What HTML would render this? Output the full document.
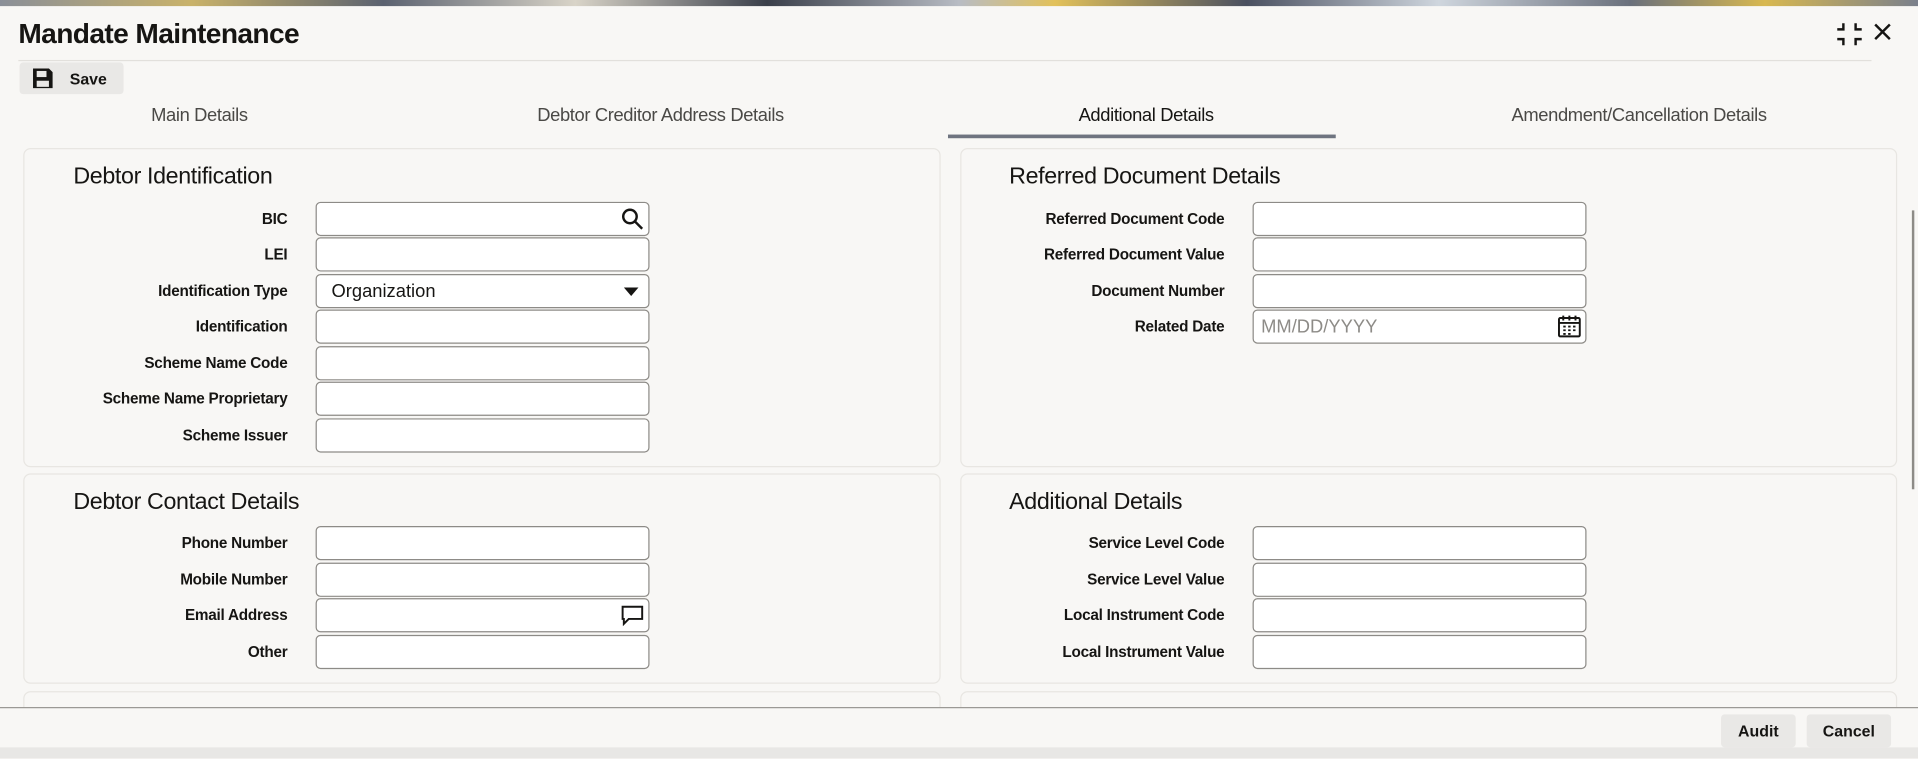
<!DOCTYPE html>
<html><head><meta charset="utf-8"><style>
*{box-sizing:border-box;margin:0;padding:0}
body{width:1918px;height:759px;overflow:hidden;background:#f7f6f4;font-family:"Liberation Sans",sans-serif;}
#w{width:1568px;height:620px;transform:scale(1.22321);transform-origin:0 0;position:relative;background:#f8f7f5}
.a{position:absolute}
.top{left:0;top:0;width:1568px;height:5px;background:linear-gradient(90deg,#8a8f98,#c9b26a 10%,#5b6270 20%,#d9d4c8 30%,#3a3f4a 40%,#b8bcc4 50%,#e2c15a 55%,#4a5060 65%,#cfd6de 75%,#6a707c 85%,#d8b850 92%,#7a808c)}
h1{position:absolute;left:15px;top:14px;font-size:23px;font-weight:bold;color:#161513;letter-spacing:-0.5px}
.hl{left:15px;top:49px;width:1515px;height:1px;background:#e2e0dc}
.save{left:16px;top:51px;width:85px;height:26px;background:#e9e8e6;border-radius:3px;font-size:13px;font-weight:bold;color:#161513}
.tab{top:86px;font-size:15px;color:#4a4946;transform:translateX(-50%);white-space:nowrap;letter-spacing:-0.3px}
.ul{left:775px;top:110px;width:317px;height:3px;background:#6f7480}
.pn{background:#f8f7f5;border:1px solid #e8e6e2;border-radius:6px}
.h2{font-size:19px;color:#161513;letter-spacing:-0.3px}
.lb{font-size:12.5px;font-weight:bold;color:#161513;text-align:right;width:230px;letter-spacing:-0.2px}
.in{width:273px;height:28px;background:#fff;border:1px solid #8d8b87;border-radius:4px;font-size:15px;color:#161513}
.btn{height:27px;background:#e9e8e6;border-radius:3px;font-size:13px;font-weight:bold;color:#161513;text-align:center;line-height:27px}
</style></head><body><div id="w">
<div class="a top"></div>
<h1>Mandate Maintenance</h1>
<div class="a" style="left:1500px;top:17px;width:24px;height:22px">
<svg width="24" height="22" viewBox="0 0 24 22" fill="none" stroke="#161513" stroke-width="2"><path d="M7 2v5H2M17 2v5h5M7 20v-5H2M17 20v-5h5"/></svg></div>
<div class="a" style="left:1531px;top:18px"><svg width="16" height="16" viewBox="0 0 16 16" stroke="#161513" stroke-width="2"><path d="M2 2L14 14M14 2L2 14"/></svg></div>
<div class="a hl"></div>
<div class="a save"><svg class="a" style="left:10px;top:4px" width="18" height="18" viewBox="0 0 18 18"><path d="M1 1h13l3 3v13H1z" fill="#161513"/><rect x="4" y="3" width="8" height="5" fill="#e9e8e6"/><rect x="4" y="11" width="10" height="5" fill="#e9e8e6"/></svg><span class="a" style="left:41px;top:6px">Save</span></div>
<div class="a tab" style="left:163px">Main Details</div>
<div class="a tab" style="left:540px">Debtor Creditor Address Details</div>
<div class="a tab" style="left:937px;color:#161513">Additional Details</div>
<div class="a tab" style="left:1340px">Amendment/Cancellation Details</div>
<div class="a ul"></div>

<div class="a pn" style="left:19px;top:121px;width:750px;height:261px"></div>
<div class="a pn" style="left:785px;top:121px;width:766px;height:261px"></div>
<div class="a pn" style="left:19px;top:387px;width:750px;height:172px"></div>
<div class="a pn" style="left:785px;top:387px;width:766px;height:172px"></div>
<div class="a pn" style="left:19px;top:565px;width:750px;height:30px"></div>
<div class="a pn" style="left:785px;top:565px;width:766px;height:30px"></div>

<div class="a h2" style="left:60px;top:134px">Debtor Identification</div>
<div class="a h2" style="left:825px;top:134px">Referred Document Details</div>
<div class="a h2" style="left:60px;top:400px">Debtor Contact Details</div>
<div class="a h2" style="left:825px;top:400px">Additional Details</div>

<div class="a lb" style="left:5px;top:172px">BIC</div><div class="a in" style="left:258px;top:165px"><svg class="a" style="right:4px;top:4px" width="18" height="18" viewBox="0 0 18 18" fill="none" stroke="#161513" stroke-width="2"><circle cx="7" cy="7" r="5.5"/><path d="M11 11l6 6"/></svg></div>
<div class="a lb" style="left:5px;top:201px">LEI</div><div class="a in" style="left:258px;top:194px"></div>
<div class="a lb" style="left:5px;top:231px">Identification Type</div><div class="a in" style="left:258px;top:224px"><span class="a" style="left:12px;top:5px">Organization</span><svg class="a" style="right:8px;top:10px" width="12" height="7"><path d="M0 0h12L6 7z" fill="#161513"/></svg></div>
<div class="a lb" style="left:5px;top:260px">Identification</div><div class="a in" style="left:258px;top:253px"></div>
<div class="a lb" style="left:5px;top:290px">Scheme Name Code</div><div class="a in" style="left:258px;top:283px"></div>
<div class="a lb" style="left:5px;top:319px">Scheme Name Proprietary</div><div class="a in" style="left:258px;top:312px"></div>
<div class="a lb" style="left:5px;top:349px">Scheme Issuer</div><div class="a in" style="left:258px;top:342px"></div>

<div class="a lb" style="left:771px;top:172px">Referred Document Code</div><div class="a in" style="left:1024px;top:165px"></div>
<div class="a lb" style="left:771px;top:201px">Referred Document Value</div><div class="a in" style="left:1024px;top:194px"></div>
<div class="a lb" style="left:771px;top:231px">Document Number</div><div class="a in" style="left:1024px;top:224px"></div>
<div class="a lb" style="left:771px;top:260px">Related Date</div><div class="a in" style="left:1024px;top:253px"><span class="a" style="left:6px;top:5px;color:#8d8b87">MM/DD/YYYY</span><svg class="a" style="right:3px;top:3px" width="20" height="20" viewBox="0 0 20 20" fill="none" stroke="#161513" stroke-width="1.6"><rect x="1.5" y="3" width="17" height="15" rx="1"/><path d="M1.5 7h17M5 1v4M10 1v4M15 1v4" /><path d="M5 10h2M9 10h2M13 10h2M5 13h2M9 13h2M13 13h2M5 16h2M9 16h2" stroke-width="1.5"/></svg></div>

<div class="a lb" style="left:5px;top:437px">Phone Number</div><div class="a in" style="left:258px;top:430px"></div>
<div class="a lb" style="left:5px;top:467px">Mobile Number</div><div class="a in" style="left:258px;top:460px"></div>
<div class="a lb" style="left:5px;top:496px">Email Address</div><div class="a in" style="left:258px;top:489px"><svg class="a" style="right:3px;top:4px" width="20" height="18" viewBox="0 0 20 18" fill="none" stroke="#161513" stroke-width="1.6"><path d="M2 2h16v10H7l-4 4v-4H2z"/></svg></div>
<div class="a lb" style="left:5px;top:526px">Other</div><div class="a in" style="left:258px;top:519px"></div>

<div class="a lb" style="left:771px;top:437px">Service Level Code</div><div class="a in" style="left:1024px;top:430px"></div>
<div class="a lb" style="left:771px;top:467px">Service Level Value</div><div class="a in" style="left:1024px;top:460px"></div>
<div class="a lb" style="left:771px;top:496px">Local Instrument Code</div><div class="a in" style="left:1024px;top:489px"></div>
<div class="a lb" style="left:771px;top:526px">Local Instrument Value</div><div class="a in" style="left:1024px;top:519px"></div>

<div class="a" style="left:1563px;top:172px;width:2px;height:228px;background:#8d8b87"></div>
<div class="a" style="left:0;top:578px;width:1568px;height:33px;background:#f8f7f5;border-top:1px solid #9a9894"></div>
<div class="a btn" style="left:1407px;top:584px;width:61px">Audit</div>
<div class="a btn" style="left:1477px;top:584px;width:69px">Cancel</div>
<div class="a" style="left:0;top:611px;width:1568px;height:9px;background:#e8e7e5"></div>
</div></body></html>
